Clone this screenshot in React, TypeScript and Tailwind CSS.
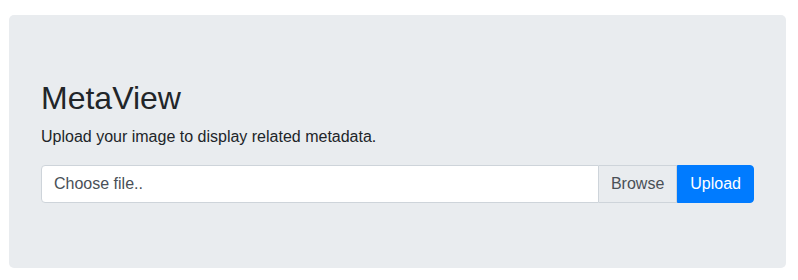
export default function App() {
  return (
    <div className="min-h-screen bg-white pt-[15px] pl-[9px] text-[#212529] font-['Liberation_Sans',Arial,sans-serif]">
      <div className="w-[777px] h-[253px] rounded-[5px] bg-[#e9ecef] px-8 pt-16">
        <h1 className="text-[32px] leading-[1.2] font-medium mb-2">MetaView</h1>
        <p className="text-base leading-6 mb-4">Upload your image to display related metadata.</p>
        <div className="flex h-[38px] mt-px">
          <div className="flex-1 flex items-center bg-white border border-[#ced4da] rounded-l-[4px] px-3 text-base text-[#495057]">
            Choose file..
          </div>
          <div className="flex items-center bg-[#e9ecef] border border-l-0 border-[#ced4da] px-3 text-base text-[#495057]">
            Browse
          </div>
          <button className="flex items-center bg-[#007bff] text-white px-3 text-base rounded-r-[4px] border border-[#007bff]">
            Upload
          </button>
        </div>
      </div>
    </div>
  );
}
